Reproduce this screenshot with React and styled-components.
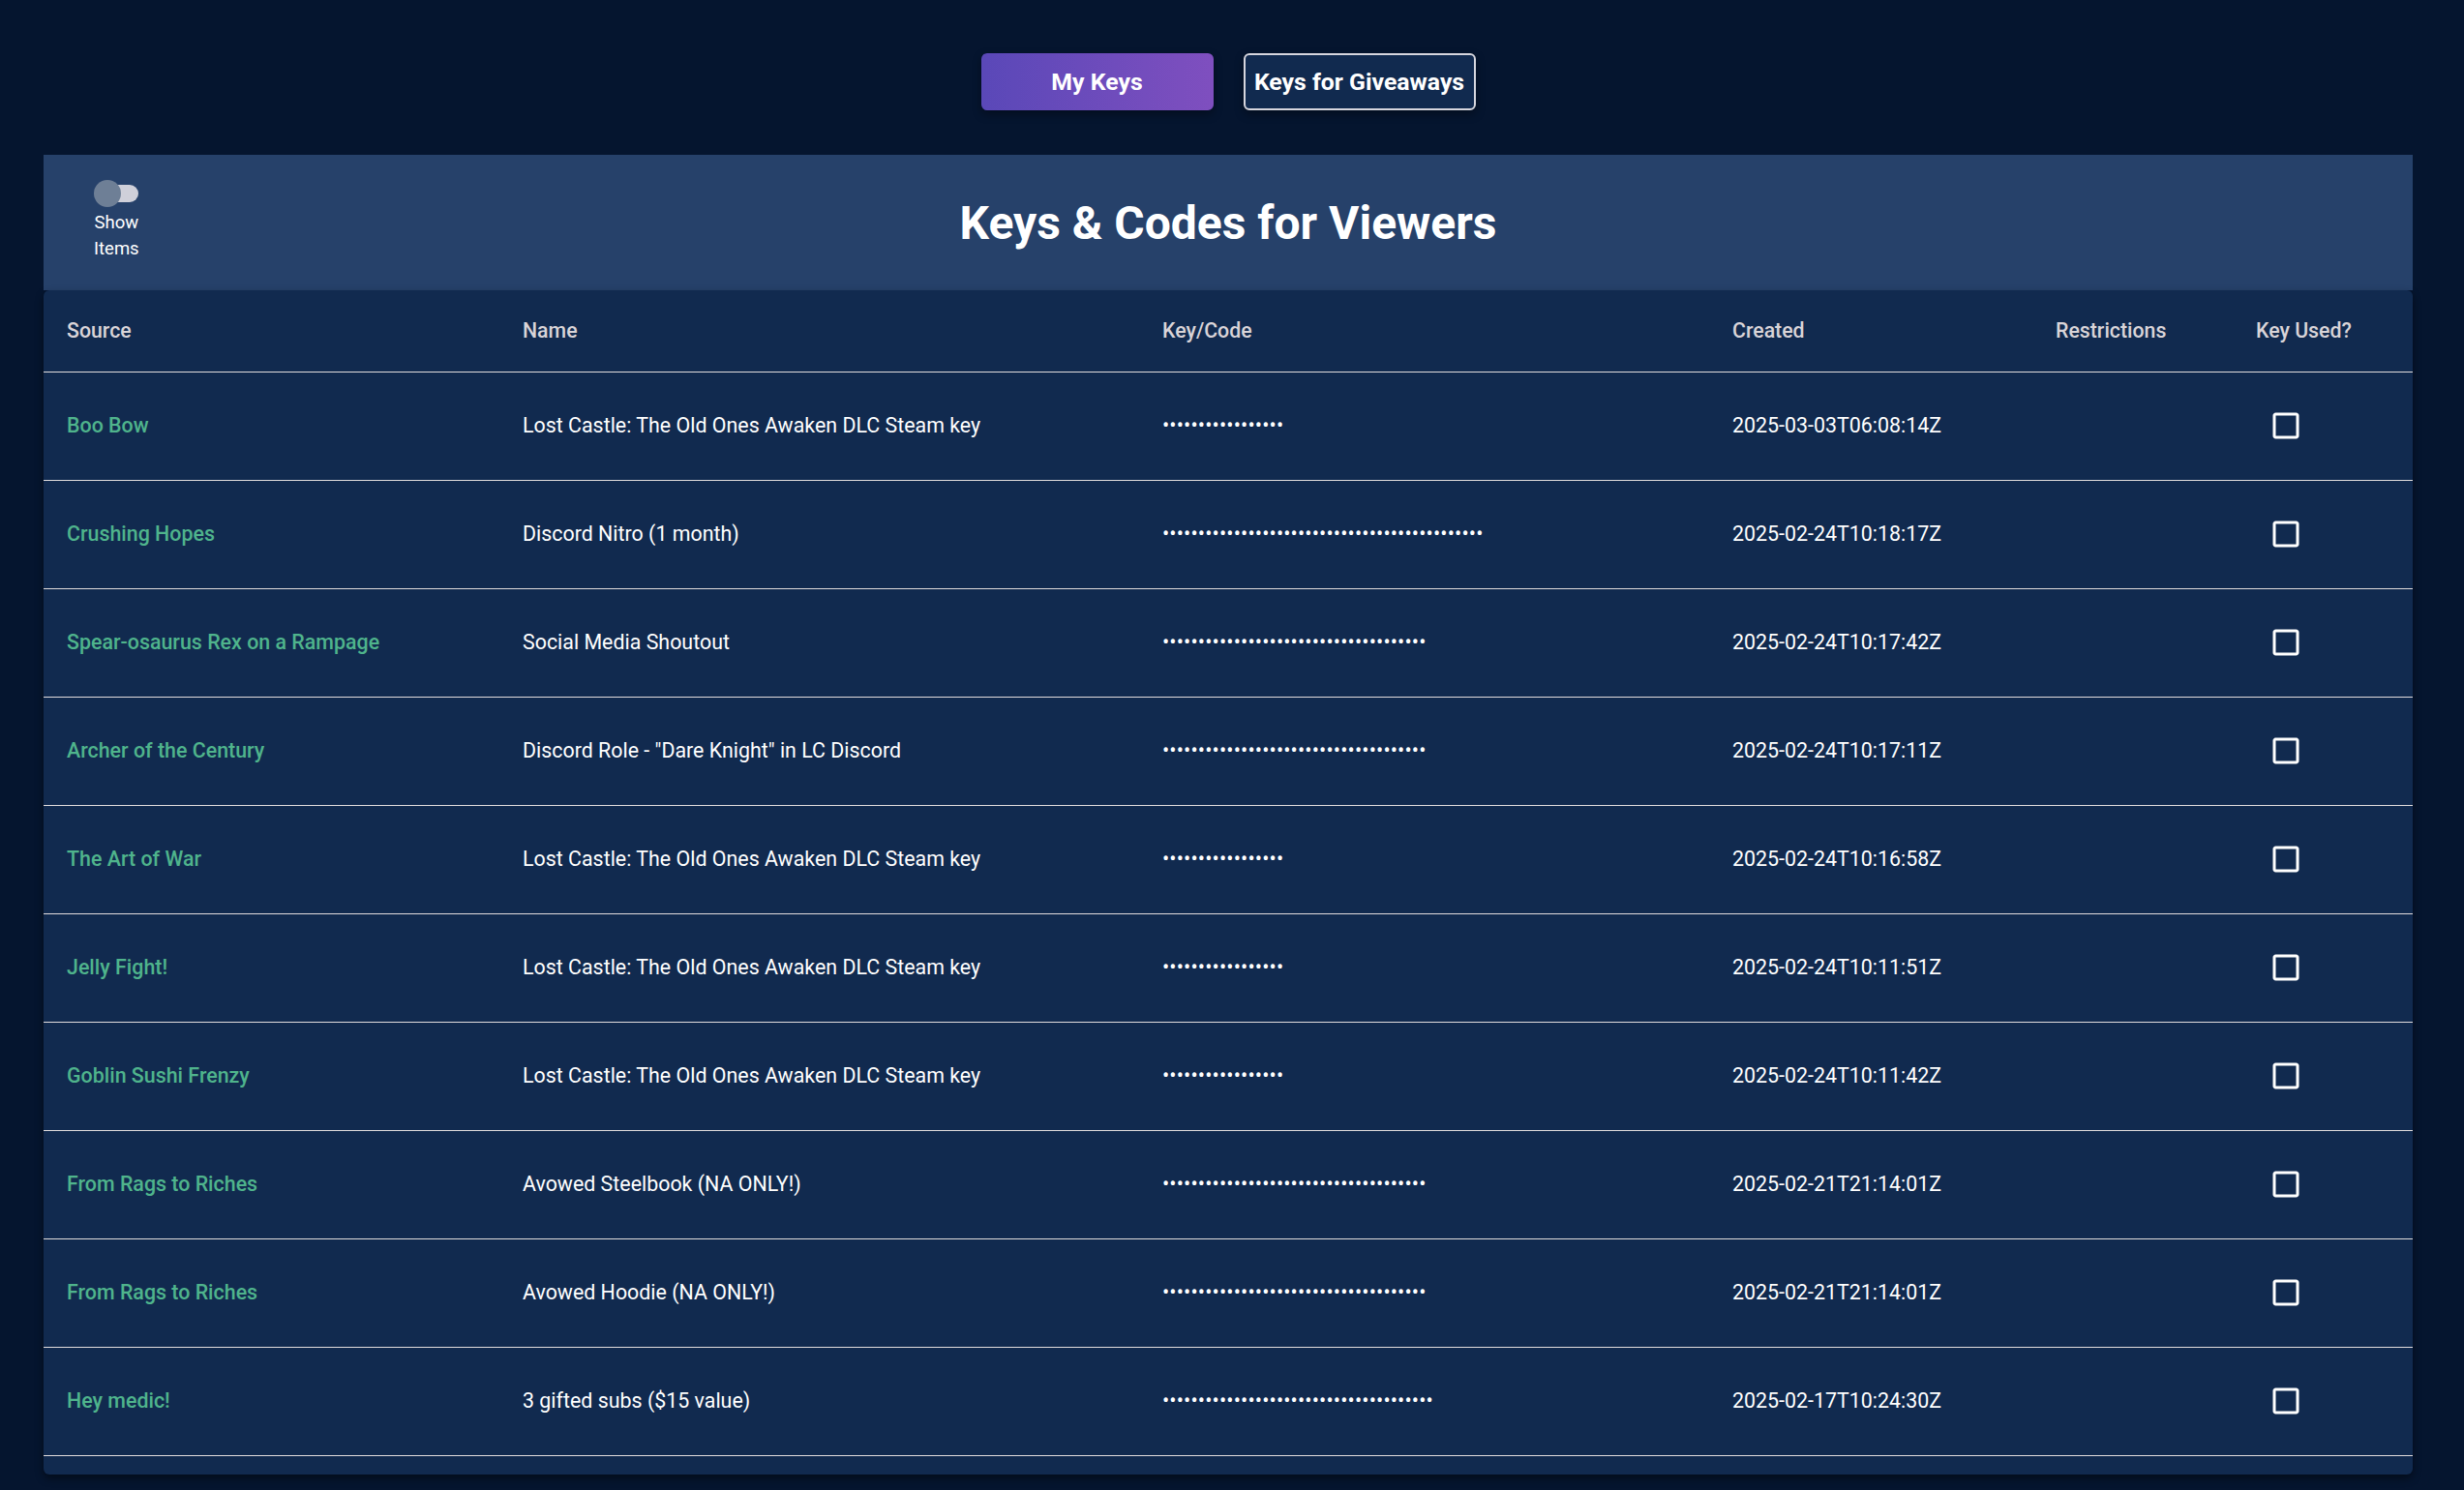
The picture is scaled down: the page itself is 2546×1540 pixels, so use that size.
import React, { useState } from 'react'
import styled, { createGlobalStyle } from 'styled-components';

const GlobalStyle = createGlobalStyle`
  body {
    margin: 0;
    background: #05152f;
    font-family: Roboto, "Liberation Sans", Arial, sans-serif;
  }
`;

const Page = styled.div`
  padding: 55px 53px 17px 45px;
`;

const ButtonBar = styled.div`
  display: flex;
  justify-content: center;
  gap: 31px;
  margin-bottom: 46px;
`;

const TabButton = styled.button`
  min-width: 240px;
  height: 59px;
  padding: 0 8px;
  border-radius: 6px;
  font-family: inherit;
  font-size: 24.8px;
  font-weight: 700;
  color: #fff;
  cursor: pointer;
  box-shadow: 0 4px 10px rgba(0, 0, 0, 0.35);
  border: ${p => (p.$active ? 'none' : '2px solid #d6d6de')};
  background: ${p => (p.$active ? 'linear-gradient(90deg, #5a48b8, #7f4fbf)' : '#112a4f')};
`;

const HeaderBand = styled.div`
  display: grid;
  grid-template-columns: 1fr auto 1fr;
  align-items: center;
  height: 140px;
  background: #26416a;
`;

const ToggleBlock = styled.div`
  display: flex;
  flex-direction: column;
  align-items: center;
  justify-self: start;
  margin-left: 52px;
  margin-top: -4px;
`;

const SwitchTrack = styled.div`
  position: relative;
  width: 46px;
  height: 28px;
  cursor: pointer;

  &::before {
    content: '';
    position: absolute;
    left: 4px;
    right: 0;
    top: 5px;
    height: 18px;
    border-radius: 9px;
    background: #cfd0da;
  }
`;

const SwitchKnob = styled.div`
  position: absolute;
  top: 0;
  left: ${p => (p.$on ? '18px' : '0')};
  width: 28px;
  height: 28px;
  border-radius: 50%;
  background: #6e7f96;
`;

const ToggleLabel = styled.span`
  width: min-content;
  text-align: center;
  font-size: 18.5px;
  line-height: 27px;
  color: #fff;
  margin-top: 3px;
`;

const Title = styled.h1`
  margin: 0;
  font-size: 48px;
  font-weight: 700;
  color: #fff;
`;

const Paper = styled.div`
  background: #112a4f;
  border-radius: 6px;
  padding-bottom: 19px;
  box-shadow: 0 4px 8px rgba(0, 0, 0, 0.45);
`;

const Table = styled.table`
  width: 100%;
  border-collapse: collapse;
  table-layout: fixed;
`;

const Th = styled.th`
  box-sizing: border-box;
  width: ${p => p.$width}px;
  padding: 24px;
  text-align: left;
  font-size: 21.3px;
  line-height: 36px;
  font-weight: 500;
  color: #d9d4d8;
  border-bottom: 1px solid #e2dddd;
  white-space: nowrap;
`;

const Td = styled.td`
  height: 109px;
  padding: 0 24px 2px;
  font-size: 21.4px;
  line-height: 32px;
  color: #fff;
  border-bottom: 1px solid #e2dddd;
  white-space: nowrap;
`;

const SourceLink = styled.a`
  color: #4fb48c;
  font-weight: 500;
  text-decoration: none;
  cursor: pointer;
`;

const Masked = styled.span`
  letter-spacing: 0.15px;
`;

const CheckWrap = styled.span`
  display: inline-flex;
  padding: 13px;
  cursor: pointer;
  color: #fff;
`;

const columns = [
  { label: 'Source', width: 471 },
  { label: 'Name', width: 661 },
  { label: 'Key/Code', width: 589 },
  { label: 'Created', width: 334 },
  { label: 'Restrictions', width: 207 },
  { label: 'Key Used?', width: 186 },
];

const keys = [
  { source: 'Boo Bow', name: 'Lost Castle: The Old Ones Awaken DLC Steam key', len: 17, created: '2025-03-03T06:08:14Z' },
  { source: 'Crushing Hopes', name: 'Discord Nitro (1 month)', len: 45, created: '2025-02-24T10:18:17Z' },
  { source: 'Spear-osaurus Rex on a Rampage', name: 'Social Media Shoutout', len: 37, created: '2025-02-24T10:17:42Z' },
  { source: 'Archer of the Century', name: 'Discord Role - "Dare Knight" in LC Discord', len: 37, created: '2025-02-24T10:17:11Z' },
  { source: 'The Art of War', name: 'Lost Castle: The Old Ones Awaken DLC Steam key', len: 17, created: '2025-02-24T10:16:58Z' },
  { source: 'Jelly Fight!', name: 'Lost Castle: The Old Ones Awaken DLC Steam key', len: 17, created: '2025-02-24T10:11:51Z' },
  { source: 'Goblin Sushi Frenzy', name: 'Lost Castle: The Old Ones Awaken DLC Steam key', len: 17, created: '2025-02-24T10:11:42Z' },
  { source: 'From Rags to Riches', name: 'Avowed Steelbook (NA ONLY!)', len: 37, created: '2025-02-21T21:14:01Z' },
  { source: 'From Rags to Riches', name: 'Avowed Hoodie (NA ONLY!)', len: 37, created: '2025-02-21T21:14:01Z' },
  { source: 'Hey medic!', name: '3 gifted subs ($15 value)', len: 38, created: '2025-02-17T10:24:30Z' },
];

const CheckBoxIcon = () => (
  <svg width="36" height="36" viewBox="0 0 24 24" fill="currentColor">
    <path d="M19 5v14H5V5h14m0-2H5c-1.11 0-2 .9-2 2v14c0 1.1.89 2 2 2h14c1.1 0 2-.9 2-2V5c0-1.1-.9-2-2-2z" />
  </svg>
);

const App = () => {
  const [showItems, setShowItems] = useState(false);

  return (
    <>
      <GlobalStyle />
      <Page>
        <ButtonBar>
          <TabButton $active>My Keys</TabButton>
          <TabButton>Keys for Giveaways</TabButton>
        </ButtonBar>

        <HeaderBand>
          <ToggleBlock>
            <SwitchTrack onClick={() => setShowItems(prev => !prev)}>
              <SwitchKnob $on={showItems} />
            </SwitchTrack>
            <ToggleLabel>Show Items</ToggleLabel>
          </ToggleBlock>
          <Title>Keys &amp; Codes for Viewers</Title>
          <div />
        </HeaderBand>

        <Paper>
          <Table>
            <thead>
              <tr>
                {columns.map(col => (
                  <Th key={col.label} $width={col.width}>{col.label}</Th>
                ))}
              </tr>
            </thead>
            <tbody>
              {keys.map((key, index) => (
                <tr key={index}>
                  <Td><SourceLink>{key.source}</SourceLink></Td>
                  <Td>{key.name}</Td>
                  <Td><Masked>{'•'.repeat(key.len)}</Masked></Td>
                  <Td>{key.created}</Td>
                  <Td></Td>
                  <Td>
                    <CheckWrap><CheckBoxIcon /></CheckWrap>
                  </Td>
                </tr>
              ))}
            </tbody>
          </Table>
        </Paper>
      </Page>
    </>
  )
}

export default App
